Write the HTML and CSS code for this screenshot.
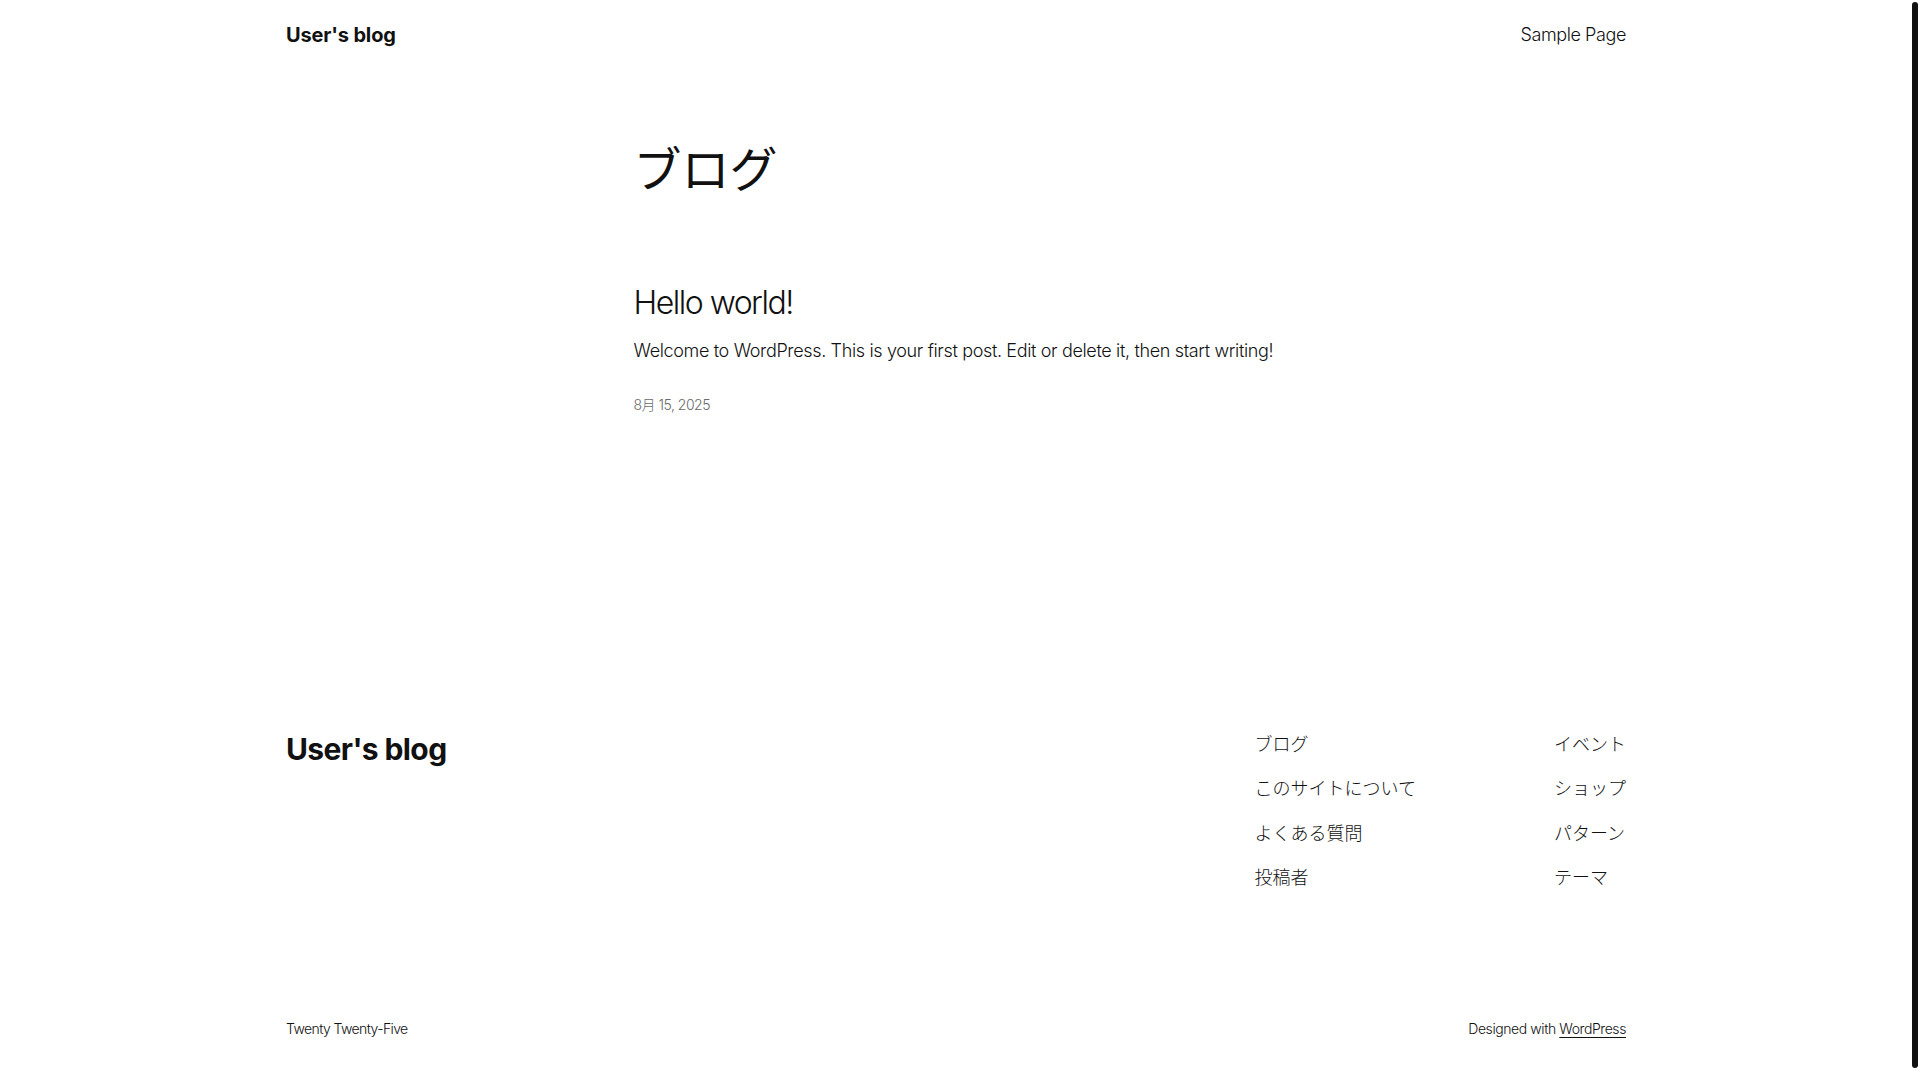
FILE: index.html
```html
<!DOCTYPE html>
<html lang="ja">
<head>
<meta charset="utf-8">
<title>User's blog</title>
<link rel="stylesheet" href="styles.css">
</head>
<body>
<header class="site-header">
  <div class="wide header-row">
    <a class="site-title" href="#">User's blog</a>
    <nav class="header-nav"><a href="#">Sample Page</a></nav>
  </div>
</header>
<main class="main">
  <div class="content">
    <h1 class="page-title">ブログ</h1>
    <article class="post">
      <h2 class="post-title"><a href="#">Hello world!</a></h2>
      <p class="excerpt">Welcome to WordPress. This is your first post. Edit or delete it, then start writing!</p>
      <time class="post-date">8月 15, 2025</time>
    </article>
  </div>
</main>
<footer class="site-footer">
  <div class="wide footer-top">
    <a class="footer-title" href="#">User's blog</a>
    <div class="footer-navs">
      <ul class="footer-menu">
        <li><a href="#">ブログ</a></li>
        <li><a href="#">このサイトについて</a></li>
        <li><a href="#">よくある質問</a></li>
        <li><a href="#">投稿者</a></li>
      </ul>
      <ul class="footer-menu">
        <li><a href="#">イベント</a></li>
        <li><a href="#">ショップ</a></li>
        <li><a href="#">パターン</a></li>
        <li><a href="#">テーマ</a></li>
      </ul>
    </div>
  </div>
  <div class="wide footer-bottom">
    <p class="credit credit-theme">Twenty Twenty-Five</p>
    <p class="credit credit-wp">Designed with <a class="credit-link" href="#">WordPress</a></p>
  </div>
</footer>
<div class="scroll-thumb"></div>
</body>
</html>
```

FILE: styles.css
```css
html {
  background: #ffffff;
}
body {
  margin: 0 8px 0 0;
  font-family: Inter, "Noto Sans CJK JP", sans-serif;
  font-weight: 300;
  font-size: 18px;
  line-height: 1.6;
  color: #111111;
  background: #ffffff;
}
a {
  color: inherit;
  text-decoration: none;
}
.wide {
  max-width: 1340px;
  margin: 0 auto;
}
.site-header {
  height: 70px;
}
.header-row {
  height: 100%;
  display: flex;
  align-items: center;
  justify-content: space-between;
}
.site-title {
  font-size: 20px;
  font-weight: 700;
  letter-spacing: -0.15px;
}
.header-nav {
  font-size: 18px;
  letter-spacing: -0.4px;
}
.main {
  padding-top: 70.5px;
}
.content {
  max-width: 645px;
  margin: 0 auto;
}
.page-title {
  margin: 0;
  font-size: 48px;
  line-height: 1.2;
  font-weight: 400;
}
.post {
  margin-top: 86px;
}
.post-title {
  margin: 0;
  font-size: 32px;
  line-height: 1.2;
  font-weight: 350;
  letter-spacing: -1.5px;
}
.excerpt {
  margin: 15px 0 0;
  line-height: 28.8px;
  letter-spacing: -0.35px;
}
.post-date {
  display: block;
  margin-top: 28px;
  font-size: 14px;
  line-height: 22.4px;
  color: #686868;
  letter-spacing: -0.5px;
}
.site-footer {
  padding-top: 314.4px;
  padding-bottom: 41px;
}
.footer-top {
  display: flex;
  justify-content: space-between;
  align-items: flex-start;
}
.footer-title {
  font-size: 30px;
  line-height: 36px;
  font-weight: 700;
  letter-spacing: -0.6px;
}
.footer-navs {
  display: flex;
  gap: 138px;
}
.footer-menu {
  list-style: none;
  margin: 0;
  padding: 0;
  display: flex;
  flex-direction: column;
  gap: 16.3px;
}
.footer-menu li {
  line-height: 28px;
}
.footer-bottom {
  margin-top: 126.3px;
  display: flex;
  justify-content: space-between;
}
.credit {
  margin: 0;
  font-size: 14px;
  line-height: 22.4px;
}
.credit-theme {
  letter-spacing: -0.6px;
}
.credit-wp {
  letter-spacing: -0.42px;
}
.credit-link {
  text-decoration: underline;
  text-underline-offset: 3px;
}
.scroll-thumb {
  position: fixed;
  top: 2px;
  right: 2px;
  width: 6px;
  height: 1066px;
  border-radius: 3px;
  background: #111111;
}
```
